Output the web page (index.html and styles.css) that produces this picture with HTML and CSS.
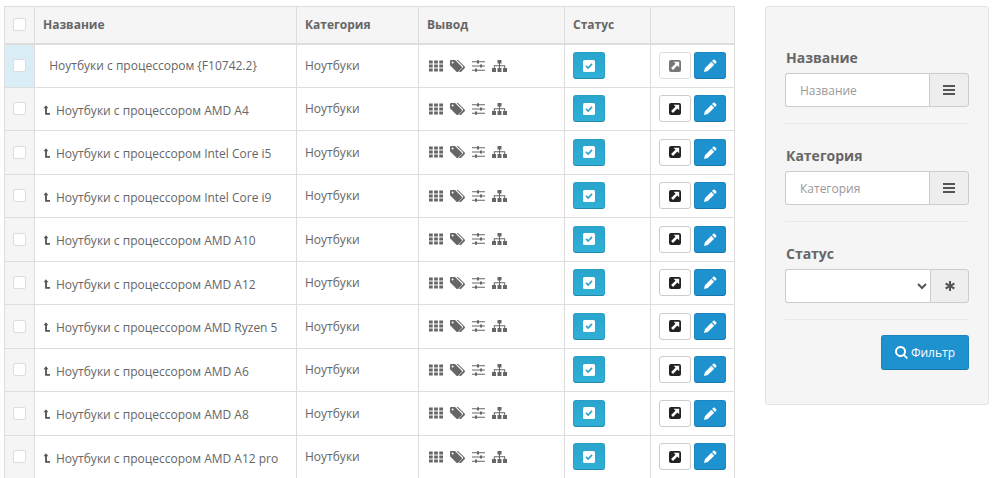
FILE: index.html
```html
<!DOCTYPE html>
<html lang="ru">
<head>
<meta charset="utf-8">
<title>Фильтры</title>
<link rel="stylesheet" href="styles.css">
</head>
<body>
<svg class="defs" aria-hidden="true">
  <symbol id="i-up" viewBox="0 0 8 11"><path d="M0.6 3.6 3.4 0.2 6.2 3.6H4.5V8.8H8V10.8H2.4V3.6z"/></symbol>
  <symbol id="i-grid" viewBox="0 0 15 12"><path d="M0 0h4v3.2H0zM5.500 0h4v3.200h-4zM11 0h4v3.200h-4zM0 4.400h4v3.200H0zM5.500 4.400h4v3.200h-4zM11 4.400h4v3.200h-4zM0 8.800h4V12H0zM5.500 8.800h4V12h-4zM11 8.800h4V12h-4z"/></symbol>
  <symbol id="i-tags" viewBox="0 0 15 12"><path d="M0 1.200C0 .5.500 0 1.200 0H5l6.600 6.600c.5.500.5 1.200 0 1.700l-3.400 3.400c-.5.500-1.200.5-1.700 0L0 5.200zM2.600 1.600a1 1 0 1 0 0 2 1 1 0 0 0 0-2z"/><path d="M6.600 0H8l6.600 6.600c.5.500.5 1.200 0 1.700l-3.400 3.400c-.5.500-1.200.5-1.700 0l-.4-.4 3.700-3.700c.5-.5.5-1.200 0-1.700z"/></symbol>
  <symbol id="i-sliders" viewBox="0 0 13 12"><path d="M0 1.300h5V.2h2v1.100h6v1H7v1.100H5V2.300H0zM0 5.500h8V4.400h2v1.100h3v1h-3v1.100H8V6.500H0zM0 9.700h3V8.600h2v1.100h8v1H5v1.100H3v-1.100H0z"/></symbol>
  <symbol id="i-sitemap" viewBox="0 0 15 12"><path d="M5.500 0h4v3.500H8V5.200h5.200V8H15v4h-4V8h1.200V6.200H8V8h1.500v4h-4V8H7V6.200H2.800V8H4v4H0V8h1.800V5.200H7V3.500H5.500z"/></symbol>
  <symbol id="i-check" viewBox="0 0 12 12"><path fill="#fff" d="M1.500 0h9A1.500 1.500 0 0 1 12 1.500v9a1.500 1.500 0 0 1-1.500 1.500h-9A1.500 1.500 0 0 1 0 10.500v-9A1.500 1.500 0 0 1 1.500 0z"/><path fill="none" stroke="#2ba7cf" stroke-width="1.700" d="M3 5.800 5.200 8 9 3.900"/></symbol>
  <symbol id="i-link" viewBox="0 0 12 12"><path fill="currentColor" d="M2 0h8a2 2 0 0 1 2 2v8a2 2 0 0 1-2 2H2a2 2 0 0 1-2-2V2a2 2 0 0 1 2-2z"/><path fill="#fff" d="M4.700 1.800h5.500v5.500L8.300 5.500 4 9.900 2.100 8 6.500 3.700z"/></symbol>
  <symbol id="i-pencil" viewBox="0 0 13 13"><path d="M9.300.8a1 1 0 0 1 1.400 0l1.500 1.500a1 1 0 0 1 0 1.400L11 4.900 8.100 2zM7.300 2.800l2.900 2.900-6.400 6.400L0 13l.9-3.800z"/></symbol>
  <symbol id="i-bars" viewBox="0 0 12 10"><path d="M0 0h12v2H0zM0 4h12v2H0zM0 8h12v2H0z"/></symbol>
  <symbol id="i-star" viewBox="0 0 10 10"><path d="M4 0h2v3.300L8.900 1.600 9.900 3.400 7 5l2.900 1.600-1 1.800L6 6.700V10H4V6.700L1.100 8.400.1 6.600 3 5 .1 3.400l1-1.800L4 3.300z"/></symbol>
  <symbol id="i-search" viewBox="0 0 13 13"><path fill-rule="evenodd" d="M5.500 0a5.500 5.500 0 0 1 4.400 8.800l3.100 3-1.300 1.200-3-3A5.500 5.500 0 1 1 5.500 0zm0 2a3.500 3.500 0 1 0 0 7 3.500 3.500 0 0 0 0-7z"/></symbol>
</svg>

<div class="page">
  <main class="list">
    <table class="grid">
      <thead>
        <tr>
          <th class="c-check"><input class="box" type="checkbox"></th>
          <th class="c-name">Название</th>
          <th class="c-cat">Категория</th>
          <th class="c-out">Вывод</th>
          <th class="c-status">Статус</th>
          <th class="c-act"></th>
        </tr>
      </thead>
      <tbody>
        <tr>
          <td class="c-check is-active"><input class="box" type="checkbox"></td>
          <td>&nbsp;&nbsp;Ноутбуки с процессором {F10742.2}</td>
          <td>Ноутбуки</td>
          <td><div class="outs"><svg class="i-grid"><use href="#i-grid"/></svg><svg class="i-tags"><use href="#i-tags"/></svg><svg class="i-sliders"><use href="#i-sliders"/></svg><svg class="i-sitemap"><use href="#i-sitemap"/></svg></div></td>
          <td><button class="btn btn-info"><svg class="i-12"><use href="#i-check"/></svg></button></td>
          <td><div class="acts"><button class="btn btn-default is-off"><svg class="i-12"><use href="#i-link"/></svg></button><button class="btn btn-primary"><svg class="i-13"><use href="#i-pencil"/></svg></button></div></td>
        </tr>
        <tr>
          <td class="c-check"><input class="box" type="checkbox"></td>
          <td class="is-child"><svg class="i-up"><use href="#i-up"/></svg>Ноутбуки с процессором AMD A4</td>
          <td>Ноутбуки</td>
          <td><div class="outs"><svg class="i-grid"><use href="#i-grid"/></svg><svg class="i-tags"><use href="#i-tags"/></svg><svg class="i-sliders"><use href="#i-sliders"/></svg><svg class="i-sitemap"><use href="#i-sitemap"/></svg></div></td>
          <td><button class="btn btn-info"><svg class="i-12"><use href="#i-check"/></svg></button></td>
          <td><div class="acts"><button class="btn btn-default"><svg class="i-12"><use href="#i-link"/></svg></button><button class="btn btn-primary"><svg class="i-13"><use href="#i-pencil"/></svg></button></div></td>
        </tr>
        <tr>
          <td class="c-check"><input class="box" type="checkbox"></td>
          <td class="is-child"><svg class="i-up"><use href="#i-up"/></svg>Ноутбуки с процессором Intel Core i5</td>
          <td>Ноутбуки</td>
          <td><div class="outs"><svg class="i-grid"><use href="#i-grid"/></svg><svg class="i-tags"><use href="#i-tags"/></svg><svg class="i-sliders"><use href="#i-sliders"/></svg><svg class="i-sitemap"><use href="#i-sitemap"/></svg></div></td>
          <td><button class="btn btn-info"><svg class="i-12"><use href="#i-check"/></svg></button></td>
          <td><div class="acts"><button class="btn btn-default"><svg class="i-12"><use href="#i-link"/></svg></button><button class="btn btn-primary"><svg class="i-13"><use href="#i-pencil"/></svg></button></div></td>
        </tr>
        <tr>
          <td class="c-check"><input class="box" type="checkbox"></td>
          <td class="is-child"><svg class="i-up"><use href="#i-up"/></svg>Ноутбуки с процессором Intel Core i9</td>
          <td>Ноутбуки</td>
          <td><div class="outs"><svg class="i-grid"><use href="#i-grid"/></svg><svg class="i-tags"><use href="#i-tags"/></svg><svg class="i-sliders"><use href="#i-sliders"/></svg><svg class="i-sitemap"><use href="#i-sitemap"/></svg></div></td>
          <td><button class="btn btn-info"><svg class="i-12"><use href="#i-check"/></svg></button></td>
          <td><div class="acts"><button class="btn btn-default"><svg class="i-12"><use href="#i-link"/></svg></button><button class="btn btn-primary"><svg class="i-13"><use href="#i-pencil"/></svg></button></div></td>
        </tr>
        <tr>
          <td class="c-check"><input class="box" type="checkbox"></td>
          <td class="is-child"><svg class="i-up"><use href="#i-up"/></svg>Ноутбуки с процессором AMD A10</td>
          <td>Ноутбуки</td>
          <td><div class="outs"><svg class="i-grid"><use href="#i-grid"/></svg><svg class="i-tags"><use href="#i-tags"/></svg><svg class="i-sliders"><use href="#i-sliders"/></svg><svg class="i-sitemap"><use href="#i-sitemap"/></svg></div></td>
          <td><button class="btn btn-info"><svg class="i-12"><use href="#i-check"/></svg></button></td>
          <td><div class="acts"><button class="btn btn-default"><svg class="i-12"><use href="#i-link"/></svg></button><button class="btn btn-primary"><svg class="i-13"><use href="#i-pencil"/></svg></button></div></td>
        </tr>
        <tr>
          <td class="c-check"><input class="box" type="checkbox"></td>
          <td class="is-child"><svg class="i-up"><use href="#i-up"/></svg>Ноутбуки с процессором AMD A12</td>
          <td>Ноутбуки</td>
          <td><div class="outs"><svg class="i-grid"><use href="#i-grid"/></svg><svg class="i-tags"><use href="#i-tags"/></svg><svg class="i-sliders"><use href="#i-sliders"/></svg><svg class="i-sitemap"><use href="#i-sitemap"/></svg></div></td>
          <td><button class="btn btn-info"><svg class="i-12"><use href="#i-check"/></svg></button></td>
          <td><div class="acts"><button class="btn btn-default"><svg class="i-12"><use href="#i-link"/></svg></button><button class="btn btn-primary"><svg class="i-13"><use href="#i-pencil"/></svg></button></div></td>
        </tr>
        <tr>
          <td class="c-check"><input class="box" type="checkbox"></td>
          <td class="is-child"><svg class="i-up"><use href="#i-up"/></svg>Ноутбуки с процессором AMD Ryzen 5</td>
          <td>Ноутбуки</td>
          <td><div class="outs"><svg class="i-grid"><use href="#i-grid"/></svg><svg class="i-tags"><use href="#i-tags"/></svg><svg class="i-sliders"><use href="#i-sliders"/></svg><svg class="i-sitemap"><use href="#i-sitemap"/></svg></div></td>
          <td><button class="btn btn-info"><svg class="i-12"><use href="#i-check"/></svg></button></td>
          <td><div class="acts"><button class="btn btn-default"><svg class="i-12"><use href="#i-link"/></svg></button><button class="btn btn-primary"><svg class="i-13"><use href="#i-pencil"/></svg></button></div></td>
        </tr>
        <tr>
          <td class="c-check"><input class="box" type="checkbox"></td>
          <td class="is-child"><svg class="i-up"><use href="#i-up"/></svg>Ноутбуки с процессором AMD A6</td>
          <td>Ноутбуки</td>
          <td><div class="outs"><svg class="i-grid"><use href="#i-grid"/></svg><svg class="i-tags"><use href="#i-tags"/></svg><svg class="i-sliders"><use href="#i-sliders"/></svg><svg class="i-sitemap"><use href="#i-sitemap"/></svg></div></td>
          <td><button class="btn btn-info"><svg class="i-12"><use href="#i-check"/></svg></button></td>
          <td><div class="acts"><button class="btn btn-default"><svg class="i-12"><use href="#i-link"/></svg></button><button class="btn btn-primary"><svg class="i-13"><use href="#i-pencil"/></svg></button></div></td>
        </tr>
        <tr>
          <td class="c-check"><input class="box" type="checkbox"></td>
          <td class="is-child"><svg class="i-up"><use href="#i-up"/></svg>Ноутбуки с процессором AMD A8</td>
          <td>Ноутбуки</td>
          <td><div class="outs"><svg class="i-grid"><use href="#i-grid"/></svg><svg class="i-tags"><use href="#i-tags"/></svg><svg class="i-sliders"><use href="#i-sliders"/></svg><svg class="i-sitemap"><use href="#i-sitemap"/></svg></div></td>
          <td><button class="btn btn-info"><svg class="i-12"><use href="#i-check"/></svg></button></td>
          <td><div class="acts"><button class="btn btn-default"><svg class="i-12"><use href="#i-link"/></svg></button><button class="btn btn-primary"><svg class="i-13"><use href="#i-pencil"/></svg></button></div></td>
        </tr>
        <tr>
          <td class="c-check"><input class="box" type="checkbox"></td>
          <td class="is-child"><svg class="i-up"><use href="#i-up"/></svg>Ноутбуки с процессором AMD A12 pro</td>
          <td>Ноутбуки</td>
          <td><div class="outs"><svg class="i-grid"><use href="#i-grid"/></svg><svg class="i-tags"><use href="#i-tags"/></svg><svg class="i-sliders"><use href="#i-sliders"/></svg><svg class="i-sitemap"><use href="#i-sitemap"/></svg></div></td>
          <td><button class="btn btn-info"><svg class="i-12"><use href="#i-check"/></svg></button></td>
          <td><div class="acts"><button class="btn btn-default"><svg class="i-12"><use href="#i-link"/></svg></button><button class="btn btn-primary"><svg class="i-13"><use href="#i-pencil"/></svg></button></div></td>
        </tr>
      </tbody>
    </table>
  </main>

  <aside class="panel">
    <div class="field">
      <label class="label">Название</label>
      <div class="group">
        <input class="control" type="text" placeholder="Название">
        <span class="addon"><svg class="i-bars"><use href="#i-bars"/></svg></span>
      </div>
    </div>
    <div class="field">
      <label class="label">Категория</label>
      <div class="group">
        <input class="control" type="text" placeholder="Категория">
        <span class="addon"><svg class="i-bars"><use href="#i-bars"/></svg></span>
      </div>
    </div>
    <div class="field">
      <label class="label">Статус</label>
      <div class="group">
        <select class="control control-select"><option></option></select>
        <span class="addon addon-narrow"><svg class="i-star"><use href="#i-star"/></svg></span>
      </div>
    </div>
    <div class="actions">
      <button class="btn btn-primary btn-filter"><svg class="i-search"><use href="#i-search"/></svg>Фильтр</button>
    </div>
  </aside>
</div>
</body>
</html>
```

FILE: styles.css
```css
* { box-sizing: border-box; }

html, body {
  margin: 0;
  height: 478px;
  overflow: hidden;
  background: #fff;
}

body {
  font-family: "Open Sans", sans-serif;
  font-size: 12px;
  color: #666;
}

.defs { display: none; }

.page {
  display: flex;
  align-items: flex-start;
  gap: 31px;
  padding: 6px 6px 0 4px;
}

.list { width: 730px; flex: none; }

.grid {
  width: 730px;
  table-layout: fixed;
  border-collapse: collapse;
  border: 1px solid #ddd;
}

.grid th, .grid td {
  border: 1px solid #ddd;
  padding: 0 8px;
  text-align: left;
  vertical-align: middle;
}

.grid td.is-child { padding-top: 3px; }

.grid thead tr { height: 37px; }
.grid tbody tr { height: 43.5px; }

.grid th {
  background: #f5f5f5;
  border-bottom-width: 2px;
  font-weight: 700;
  font-size: 12px;
  color: #666;
}

.c-check { width: 30px; }
.c-name { width: 262px; }
.c-cat { width: 122px; }
.c-out { width: 146px; }
.c-status { width: 86px; }
.c-act { width: 84px; }

.grid th.c-check, .grid td.c-check {
  padding: 0;
  text-align: center;
  background: #f5f5f5;
}

.grid td.is-active { background: #d9edf7; }

.box {
  appearance: none;
  display: block;
  width: 13px;
  height: 13px;
  margin: 0 auto;
  background: #fff;
  border: 1px solid #ddd;
  border-radius: 2px;
}

.i-up {
  width: 7px;
  height: 10px;
  margin-right: 6px;
  fill: #555;
  vertical-align: 0;
}

.outs {
  display: flex;
  align-items: center;
  gap: 7px;
  padding-left: 2px;
  fill: #666;
}

.i-grid { width: 14px; height: 12px; }
.i-tags { width: 15px; height: 12px; }
.i-sliders { width: 13px; height: 12px; }
.i-sitemap { width: 15px; height: 12px; }

.btn {
  display: inline-flex;
  align-items: center;
  justify-content: center;
  width: 32px;
  height: 27px;
  padding: 0;
  border: 1px solid #ccc;
  border-radius: 3px;
  font-family: inherit;
  font-size: 12px;
}

.btn-info {
  background: linear-gradient(#2aa5cd, #2fb0d7);
  border-color: #28a0c6;
  border-bottom-color: #2288a8;
}

.btn-primary {
  background: #1e91cf;
  border-color: #1c85bf;
  border-bottom-color: #1978ab;
  fill: #fff;
  color: #fff;
}

.btn-default { background: #fff; color: #222; }
.btn-default.is-off { color: #777; border-color: #ddd; }

.i-12 { width: 12px; height: 12px; }
.i-13 { width: 13px; height: 13px; }

.acts { display: flex; gap: 3px; }

.panel {
  width: 224px;
  flex: none;
  padding: 19px 19px 34px;
  background: #f5f5f5;
  border: 1px solid #e3e3e3;
  border-radius: 3px;
}

.field {
  padding: 22px 0 16px;
  border-bottom: 1px solid #e8e8e8;
}

.label {
  display: block;
  margin-bottom: 5px;
  padding-left: 1px;
  font-size: 14px;
  font-weight: 700;
  line-height: 20px;
  color: #666;
}

.group { display: flex; height: 34px; }

.control {
  flex: 1;
  min-width: 0;
  height: 34px;
  padding: 0 14px;
  font-family: inherit;
  font-size: 12px;
  color: #555;
  background: #fff;
  border: 1px solid #ccc;
  border-right: 0;
  border-radius: 3px 0 0 3px;
  outline: none;
}

.control::placeholder { color: #999; opacity: 1; }

.control-select { padding: 0 0 0 8px; }

.addon {
  display: flex;
  align-items: center;
  justify-content: center;
  flex: none;
  width: 40px;
  background: #eee;
  border: 1px solid #ccc;
  border-radius: 0 3px 3px 0;
  fill: #555;
}

.addon-narrow { width: 39px; }

.i-bars { width: 12px; height: 10px; }
.i-star { width: 10px; height: 10px; }

.actions {
  display: flex;
  justify-content: flex-end;
  padding-top: 15px;
}

.btn-filter {
  width: 88px;
  height: 35px;
  gap: 3px;
  font-weight: 500;
  font-size: 12px;
}

.i-search { width: 13px; height: 13px; }
```
